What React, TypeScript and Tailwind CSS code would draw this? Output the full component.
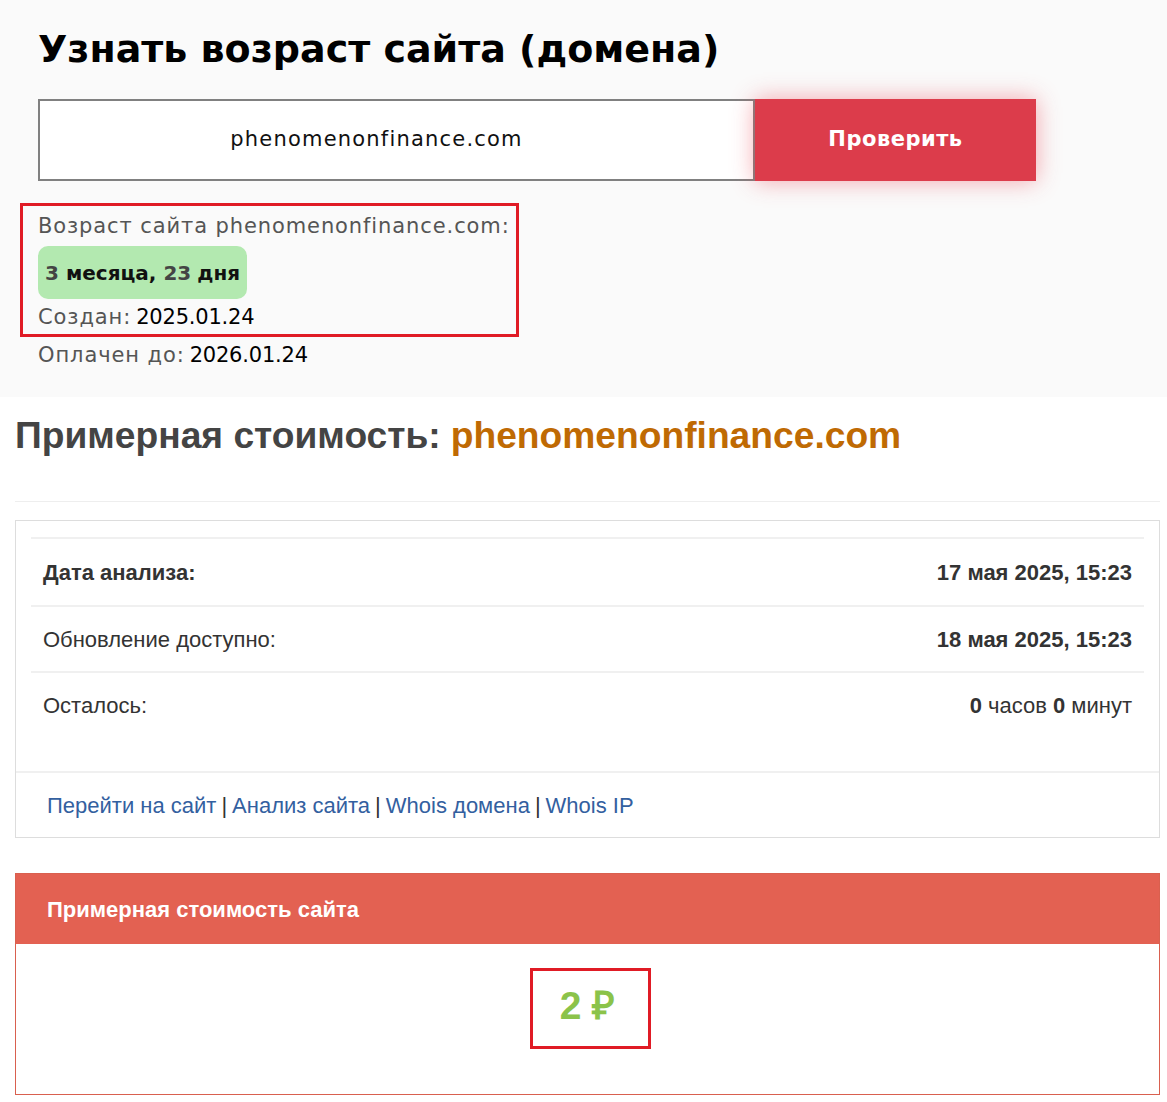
import React from "react";

const topFont = { fontFamily: '"DejaVu Sans", "Open Sans", sans-serif' };
const arial = { fontFamily: '"Liberation Sans", Arial, sans-serif' };

export default function App() {
  return (
    <div className="w-[1167px] min-h-[1102px] bg-white">
      {/* Top section */}
      <div className="bg-[#fafafa] pl-[38px] pt-[22px] pb-[24px]" style={topFont}>
        <h1 className="text-[38px] font-bold leading-[54px] text-black">
          Узнать возраст сайта (домена)
        </h1>
        <div className="mt-[23px] flex">
          <div className="flex h-[82px] w-[717px] items-center justify-center border-2 border-[#808080] bg-white pr-[40px] text-[21px] tracking-[1.2px] text-[#111]">
            phenomenonfinance.com
          </div>
          <button className="h-[82px] w-[281px] bg-[#dc3c4b] text-[21px] font-bold tracking-[0.5px] text-white shadow-[0_0_22px_rgba(235,60,75,0.45)]">
            Проверить
          </button>
        </div>
        <div className="mt-[22px] -ml-[18px] w-[499px] border-[3px] border-[#e01b25] pl-[15px] text-[21px] tracking-[0.9px]">
          <div className="flex h-[40px] items-center pt-[2px] text-[#555]">
            Возраст сайта phenomenonfinance.com:
          </div>
          <div className="flex h-[53px] w-[209px] items-center rounded-[10px] bg-[#b3e9b0] pl-[7px] text-[20px] tracking-normal">
            <span className="font-bold text-[#444]">3</span>
            <span className="ml-[7px] font-semibold text-[#111]">месяца,</span>
            <span className="ml-[7px] font-bold text-[#444]">23</span>
            <span className="ml-[6px] font-semibold text-[#111]">дня</span>
          </div>
          <div className="flex h-[35px] items-center pt-[2px]">
            <span className="text-[#555]">Создан:</span>
            <span className="ml-[5px] tracking-[-0.2px] text-black">2025.01.24</span>
          </div>
        </div>
        <div className="flex h-[36px] items-center pt-[2px] text-[21px] tracking-[0.9px]">
          <span className="text-[#555]">Оплачен до:</span>
          <span className="ml-[5px] tracking-[-0.2px] text-black">2026.01.24</span>
        </div>
      </div>

      {/* Lower section */}
      <div className="pl-[15px] pr-[7px]" style={arial}>
        <h2 className="flex h-[78px] items-center text-[37.2px] font-bold text-[#444]">
          <span>Примерная стоимость:</span>
          <span className="ml-[10px] text-[#bf6a03]">phenomenonfinance.com</span>
        </h2>
        <div className="mt-[26px] h-px bg-[#eeeeee]" />
        <div className="mt-[18px] border border-[#dddddd] bg-white">
          <div className="px-[15px] pt-[16px] pb-[34px]">
            <div className="flex h-[68px] items-center justify-between border-t-2 border-[#f0f0f0] px-[12px] text-[22px] text-[#333]">
              <span className="font-bold">Дата анализа:</span>
              <span className="font-bold">17 мая 2025, 15:23</span>
            </div>
            <div className="flex h-[66px] items-center justify-between border-t-2 border-[#f0f0f0] px-[12px] text-[22px] text-[#333]">
              <span>Обновление доступно:</span>
              <span className="font-bold">18 мая 2025, 15:23</span>
            </div>
            <div className="flex h-[66px] items-center justify-between border-t-2 border-[#f0f0f0] px-[12px] text-[22px] text-[#333]">
              <span>Осталось:</span>
              <span>
                <b>0</b> часов <b>0</b> минут
              </span>
            </div>
          </div>
          <div className="flex h-[66px] items-center border-t-2 border-[#f0f0f0] pl-[31px] text-[22px] text-[#33609f]">
            <span>Перейти на сайт</span>
            <span className="mx-[5px] text-[#333]">|</span>
            <span>Анализ сайта</span>
            <span className="mx-[5px] text-[#333]">|</span>
            <span>Whois домена</span>
            <span className="mx-[5px] text-[#333]">|</span>
            <span>Whois IP</span>
          </div>
        </div>

        <div className="mt-[35px] border border-[#d9604f]">
          <div className="flex h-[70px] items-center bg-[#e36152] pl-[31px] text-[22px] font-bold text-white">
            Примерная стоимость сайта
          </div>
          <div className="flex h-[150px] items-start justify-center bg-white pt-[24px]">
            <div className="ml-[6px] flex h-[81px] w-[121px] items-center justify-center border-[3px] border-[#e01b25] pb-[4px] pr-[6px] text-[39px] font-bold text-[#8bc34a]">
              2 ₽
            </div>
          </div>
        </div>
      </div>
    </div>
  );
}
